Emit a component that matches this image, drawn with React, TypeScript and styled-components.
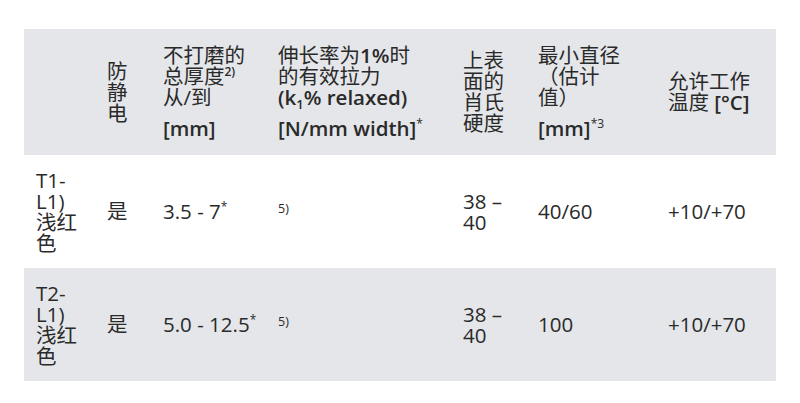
import styled, { createGlobalStyle } from 'styled-components';

const GlobalStyle = createGlobalStyle`
  html, body {
    margin: 0;
    padding: 0;
    background: #ffffff;
  }

  body {
    font-family: 'Open Sans', 'Noto Sans CJK SC', sans-serif;
    color: #2a2a2a;
  }
`;

const widths = [71, 56, 115, 185, 75, 130, 120];

interface IRow {
  name: string;
  antistatic: string;
  thickness: string;
  force: string;
  hardness: string;
  diameter: string;
  temperature: string;
}

const rows: IRow[] = [
  {
    name: 'T1-L1)',
    antistatic: '是',
    thickness: '3.5 - 7',
    force: '5)',
    hardness: '38 – 40',
    diameter: '40/60',
    temperature: '+10/+70',
  },
  {
    name: 'T2-L1)',
    antistatic: '是',
    thickness: '5.0 - 12.5',
    force: '5)',
    hardness: '38 – 40',
    diameter: '100',
    temperature: '+10/+70',
  },
];

const App = () => {
  return (
    <>
      <GlobalStyle />
      <Page>
        <Table>
          <colgroup>
            {widths.map((w, i) => (
              <Col key={i} $w={w} />
            ))}
          </colgroup>
          <thead>
            <HeadRow>
              <Th />
              <Th>防静电</Th>
              <Th>
                不打磨的
                <br />
                总厚度<Sup $bold>2)</Sup>
                <br />
                从/到
                <Unit>[mm]</Unit>
              </Th>
              <Th>
                伸长率为<b>1%</b>时
                <br />
                的有效拉力
                <br />
                <b>
                  (k<Sub>1</Sub>% relaxed)
                </b>
                <Unit>
                  [N/mm width]<Sup>*</Sup>
                </Unit>
              </Th>
              <Th>上表面的肖氏硬度</Th>
              <Th>
                最小直径
                <br />
                （估计
                <br />
                值）
                <Unit>
                  [mm]<Sup>*3</Sup>
                </Unit>
              </Th>
              <Th>
                允许工作
                <br />
                温度 <b>[°C]</b>
              </Th>
            </HeadRow>
          </thead>
          <tbody>
            {rows.map((row, i) => (
              <BodyRow key={row.name} $shaded={i % 2 === 1}>
                <Td>
                  {row.name}
                  <br />
                  浅红色
                </Td>
                <Td>{row.antistatic}</Td>
                <Td $nowrap>
                  {row.thickness}
                  <Sup>*</Sup>
                </Td>
                <Td>
                  <Note>{row.force}</Note>
                </Td>
                <Td>{row.hardness}</Td>
                <Td>{row.diameter}</Td>
                <Td>{row.temperature}</Td>
              </BodyRow>
            ))}
          </tbody>
        </Table>
      </Page>
    </>
  );
};

const Page = styled.main`
  padding: 29px 24px 22px;
`;

const Table = styled.table`
  width: 752px;
  border-collapse: collapse;
  table-layout: fixed;
  font-size: 20.5px;
  line-height: 21px;
`;

const Col = styled.col<{ $w: number }>`
  width: ${({ $w }) => $w}px;
`;

const HeadRow = styled.tr`
  height: 126px;
  background: #e4e6e9;
`;

const BodyRow = styled.tr<{ $shaded: boolean }>`
  height: 113px;
  background: ${({ $shaded }) => ($shaded ? '#e4e6e9' : '#ffffff')};
`;

const Th = styled.th`
  padding: 12px 12px;
  text-align: left;
  vertical-align: middle;
  font-weight: 400;

  b {
    font-weight: 600;
  }
`;

const Td = styled.td<{ $nowrap?: boolean }>`
  padding: 14px 12px;
  text-align: left;
  vertical-align: middle;
  white-space: ${({ $nowrap }) => ($nowrap ? 'nowrap' : 'normal')};
`;

const Unit = styled.div`
  margin-top: 10px;
  font-weight: 600;
`;

const Sup = styled.sup<{ $bold?: boolean }>`
  font-size: 12px;
  line-height: 0;
  vertical-align: 8px;
  font-weight: ${({ $bold }) => ($bold ? 600 : 400)};
`;

const Sub = styled.sub`
  font-size: 13px;
  line-height: 0;
  vertical-align: -4px;
`;

const Note = styled.span`
  display: inline-block;
  font-size: 12.5px;
  transform: translateY(-5px);
`;

export default App;
